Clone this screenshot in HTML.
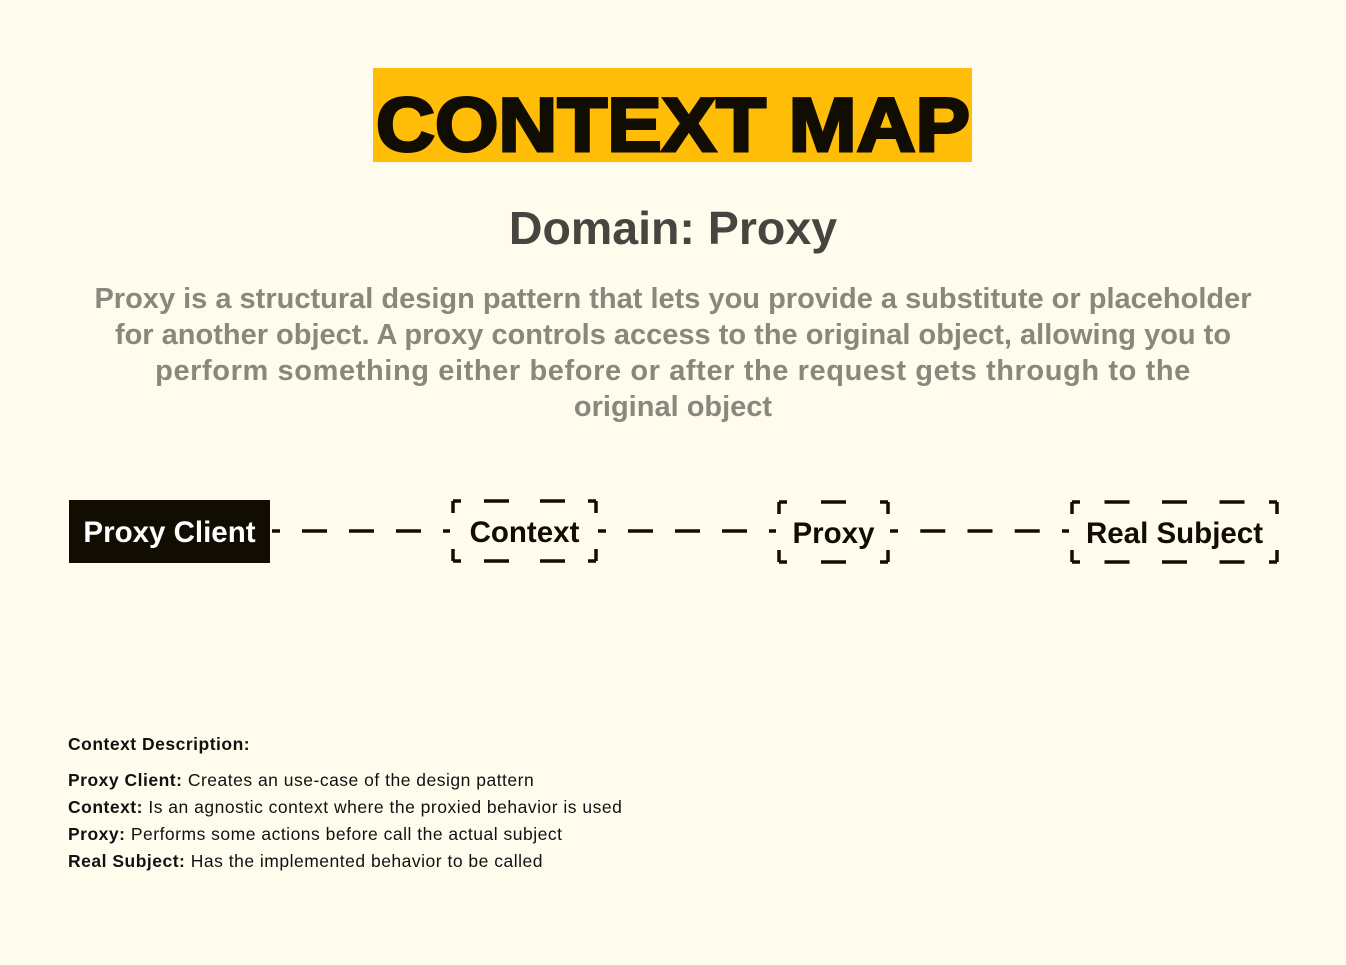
<!DOCTYPE html>
<html><head><meta charset="utf-8"><style>
body{margin:0;width:1346px;height:965px;background:#fffcee;font-family:"Liberation Sans",sans-serif;position:relative;overflow:hidden}
.t{position:absolute;left:373px;top:68px;width:599px;height:94px;background:#ffbd07}
h2{position:absolute;top:201px;left:0;width:1346px;text-align:center;margin:0;font-size:46.5px;color:#474540;font-weight:bold}
p.d{position:absolute;top:281px;left:23px;width:1300px;text-align:center;margin:0;font-size:29px;line-height:36px;color:#8a877c;font-weight:bold}
.desc{position:absolute;left:68px;top:731px;font-size:17.5px;letter-spacing:0.5px;color:#111;line-height:27px}
.desc b{font-weight:bold}
svg{position:absolute;left:0;top:0}
</style></head><body>
<div class="t"><svg width="599" height="94"><text x="3" y="83" font-family="Liberation Sans" font-weight="bold" font-size="76" textLength="594" lengthAdjust="spacingAndGlyphs" fill="#110d02" stroke="#110d02" stroke-width="3">CONTEXT MAP</text></svg></div>
<h2>Domain: Proxy</h2>
<p class="d">Proxy is a structural design pattern that lets you provide a substitute or placeholder<br>for another object. A proxy controls access to the original object, allowing you to<br><span style="letter-spacing:0.6px">perform something either before or after the request gets through to the</span><br>original object</p>
<svg id="s" width="1346" height="965">
<rect x="69" y="500" width="201" height="63" fill="#110d02"/>
<g font-family="Liberation Sans" font-weight="bold" font-size="29.5">
<text x="169.5" y="542" text-anchor="middle" fill="#fff">Proxy Client</text>
<text x="524.5" y="542" text-anchor="middle" fill="#110d02">Context</text>
<text x="833.5" y="543" text-anchor="middle" fill="#110d02">Proxy</text>
<text x="1174.5" y="543" text-anchor="middle" fill="#110d02">Real Subject</text>
</g>
</svg>
<div class="desc"><b>Context Description:</b><div style="height:9px"></div><b>Proxy Client:</b> Creates an use-case of the design pattern<br><b>Context:</b> Is an agnostic context where the proxied behavior is used<br><b>Proxy:</b> Performs some actions before call the actual subject<br><b>Real Subject:</b> Has the implemented behavior to be called</div>
<script>
var s=document.getElementById('s'),h='';
function L(x1,y1,x2,y2){h+='<line x1="'+x1+'" y1="'+y1+'" x2="'+x2+'" y2="'+y2+'" stroke="#110d02" stroke-width="3.5"/>';}
function box(a,b,t,bt){
 L(a,t,a+8,t);L(a,t,a,t+12);L(b,t,b-8,t);L(b,t,b,t+12);
 L(a,bt,a+8,bt);L(a,bt,a,bt-12);L(b,bt,b-8,bt);L(b,bt,b,bt-12);
 var w=b-a,n=Math.floor((w-14)/48),g=(w-25*n)/(n+1);
 for(var i=0;i<n;i++){var x=a+g+i*(25+g);L(x,t,x+25,t);L(x,bt,x+25,bt);}
}
function conn(a,b,y){
 L(a+2,y,a+10,y);L(b-10,y,b-3,y);
 var A=a+10,B=b-10,w=B-A,n=Math.round((w-22)/47),g=(w-25*n)/(n+1);
 for(var i=0;i<n;i++){var x=A+g+i*(25+g);L(x,y,x+25,y);}
}
box(453,596,501,561);box(779,888,502,562);box(1072,1277,502,562);
conn(270,453,531);conn(596,779,531);conn(888,1072,531);
s.insertAdjacentHTML('beforeend',h);
</script>
</body></html>
